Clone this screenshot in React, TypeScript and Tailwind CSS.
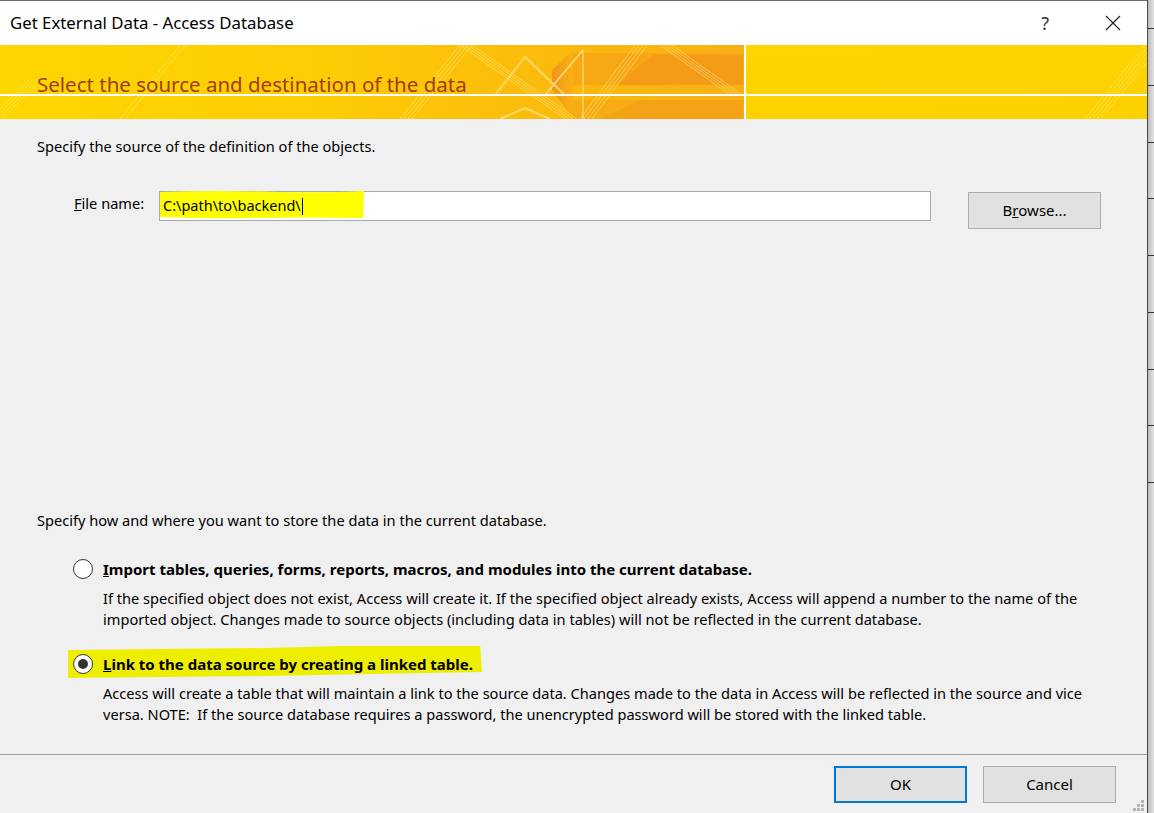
import React from "react";

const FONT = "font-['Noto_Sans',sans-serif]";

function BannerArt() {
  // decorative Office-style banner: orange wedges and pale stripes, drawn in the
  // banner's own coordinates (0..1147 x 0..74)
  const stripes = (x: number, y: number, dx: number, dy: number, n: number, gap: number) =>
    Array.from({ length: n }, (_, i) => (
      <line
        key={i}
        x1={x + i * gap}
        y1={y}
        x2={x + i * gap + dx}
        y2={y + dy}
        stroke="#fff2a0"
        strokeOpacity="0.45"
        strokeWidth="1"
      />
    ));
  return (
    <svg
      className="absolute inset-0"
      width="1147"
      height="74"
      viewBox="0 0 1147 74"
      aria-hidden
    >
      <defs>
        <linearGradient id="warm" x1="0" x2="1" y1="0" y2="0">
          <stop offset="0" stopColor="#fed600" />
          <stop offset="0.45" stopColor="#fdcc04" />
          <stop offset="0.7" stopColor="#fbbc0c" />
          <stop offset="1" stopColor="#f8b013" />
        </linearGradient>
        <linearGradient id="arrow" x1="0" x2="1" y1="0" y2="0">
          <stop offset="0" stopColor="#f29418" />
          <stop offset="1" stopColor="#f9b112" />
        </linearGradient>
        <linearGradient id="right" x1="0" x2="1" y1="0" y2="1">
          <stop offset="0" stopColor="#fed800" />
          <stop offset="1" stopColor="#fdd000" />
        </linearGradient>
      </defs>
      <rect x="0" y="0" width="1147" height="74" fill="url(#right)" />
      <rect x="0" y="0" width="745" height="74" fill="url(#warm)" />
      {/* arrow pointing left */}
      <polygon points="552,25 573,5 573,74 552,45" fill="url(#arrow)" />
      <rect x="573" y="8" width="172" height="32" fill="#f6a417" opacity="0.8" />
      <rect x="573" y="55" width="172" height="19" fill="#f6a417" opacity="0.6" />
      <rect x="582" y="5" width="2" height="69" fill="#ffe070" opacity="0.6" />
      {/* dark trapezoid on the right of the art */}
      <polygon points="617,40 653,10 743,10 743,40" fill="#f49c18" />
      <polygon points="600,74 640,55 743,55 743,74" fill="#f5a018" opacity="0.8" />
      {/* pale triangle outlines */}
      <polyline points="495,50 525,12 565,50" fill="none" stroke="#ffe27a" strokeOpacity="0.8" strokeWidth="2" />
      <polyline points="500,74 525,63 550,74" fill="none" stroke="#ffe27a" strokeOpacity="0.8" strokeWidth="2" />
      <polyline points="545,50 583,5" fill="none" stroke="#ffe8a0" strokeOpacity="0.8" strokeWidth="1.5" />
      {stripes(460, 0, 105, 74, 4, 4)}
      {stripes(660, 0, 70, 50, 4, 4)}
      {stripes(580, 74, 55, -74, 4, 4)}
      {stripes(400, 74, 60, -74, 4, 4)}
      {stripes(-10, 74, 40, -40, 4, 4)}
      {stripes(120, 74, 60, -74, 2, 5)}
      {stripes(1085, 74, 60, -74, 5, 4)}
      {/* white frame lines */}
      <rect x="0" y="49" width="1147" height="2" fill="#ffffff" />
      <rect x="744" y="0" width="2" height="74" fill="#ffffff" />
    </svg>
  );
}

function Radio({ checked }: { checked?: boolean }) {
  return (
    <span className="flex h-[20px] w-[20px] shrink-0 items-center justify-center rounded-full border border-[#333] bg-white">
      {checked && <span className="h-[10px] w-[10px] rounded-full bg-[#333]" />}
    </span>
  );
}

function Button({ children, focused }: { children: React.ReactNode; focused?: boolean }) {
  return (
    <button
      type="button"
      className={`flex h-[37px] w-[133px] items-center justify-center bg-[#e1e1e1] text-[15px] text-black ${
        focused ? "border-2 border-[#0078d7]" : "border border-[#adadad]"
      }`}
    >
      {children}
    </button>
  );
}

export default function App() {
  return (
    <div className={`flex h-[813px] w-[1154px] overflow-hidden bg-[#dcdcdc] ${FONT}`}>
      <div className="flex w-[1148px] shrink-0 flex-col border-r border-[#4a4a4a] bg-[#f0f0f0]">
        <div className="h-px bg-[#6e6e64]" />
        {/* title bar */}
        <div className="flex h-[44px] items-center bg-white pl-[10px]">
          <span className="text-[16.8px] text-black">Get External Data - Access Database</span>
          <span className="ml-auto mr-[56px] text-[18px] text-[#333]">?</span>
          <svg width="16" height="16" viewBox="0 0 16 16" className="mr-[26px]" aria-hidden>
            <path d="M1 1 L15 15 M15 1 L1 15" stroke="#222" strokeWidth="1.2" />
          </svg>
        </div>

        {/* banner */}
        <div className="relative h-[74px]">
          <BannerArt />
          <div className="relative pl-[37px] pt-[25px] text-[20.5px] leading-[28px] text-[#a23c00]">
            Select the source and destination of the data
          </div>
        </div>

        {/* body */}
        <div className="flex flex-1 flex-col pl-[37px] text-[14.6px] text-black">
          <p className="mt-[17px] leading-[20px]">Specify the source of the definition of the objects.</p>

          <div className="mt-[35px] flex items-start">
            <label className="ml-[37px] mt-[2px] w-[85px] leading-[20px]">
              <span className="underline">F</span>ile name:
            </label>
            <div className="relative h-[30px] w-[772px] border border-[#a9a9a9] bg-white">
              <svg className="absolute left-[-1px] top-[-2px]" width="206" height="30" viewBox="0 0 206 30" aria-hidden>
                <path d="M1 2 Q60 0 120 2 Q170 3 205 1 L204 28 Q150 27 100 28 Q50 29 1 27 Z" fill="#ffff00" />
              </svg>
              <span className="relative flex h-full items-center pl-[3px] text-[14.5px]">
                C:\path\to\backend\
                <span className="ml-[1px] h-[17px] w-px bg-black" />
              </span>
            </div>
            <div className="ml-[37px] mt-px">
              <Button>
                B<span className="underline">r</span>owse...
              </Button>
            </div>
          </div>

          <p className="mt-[281px] leading-[20px]">Specify how and where you want to store the data in the current database.</p>

          <div className="mt-[29px] flex items-center pl-[36px]">
            <Radio />
            <span className="ml-[10px] text-[15px] font-bold leading-[20px]">
              <span className="underline">I</span>mport tables, queries, forms, reports, macros, and modules into the current database.
            </span>
          </div>
          <div className="mt-[9px] pl-[66px] leading-[21px]">
            <div className="whitespace-nowrap">
              If the specified object does not exist, Access will create it. If the specified object already exists, Access will append a number to the name of the
            </div>
            <div className="whitespace-nowrap">
              imported object. Changes made to source objects (including data in tables) will not be reflected in the current database.
            </div>
          </div>

          <div className="relative mt-[24px] flex items-center pl-[36px]">
            <svg className="absolute left-[31px] top-[-8px]" width="420" height="36" viewBox="0 0 420 36" aria-hidden>
              <path d="M0 4 Q100 3 200 2 Q300 -1 412 -3 L414 26 Q300 28 200 30 Q100 31 0 32 Z" fill="#eeee00" />
            </svg>
            <span className="relative">
              <Radio checked />
            </span>
            <span className="relative ml-[10px] text-[15px] font-bold leading-[20px]">
              <span className="underline">L</span>ink to the data source by creating a linked table.
            </span>
          </div>
          <div className="mt-[9px] pl-[66px] leading-[21px]">
            <div className="whitespace-nowrap">
              Access will create a table that will maintain a link to the source data. Changes made to the data in Access will be reflected in the source and vice
            </div>
            <div className="whitespace-nowrap">
              versa. NOTE:&nbsp; If the source database requires a password, the unencrypted password will be stored with the linked table.
            </div>
          </div>
        </div>

        {/* footer */}
        <div className="h-px bg-[#a0a0a0]" />
        <div className="relative flex h-[58px] items-start justify-end gap-[16px] pr-[31px] pt-[11px]">
          <Button focused>OK</Button>
          <Button>Cancel</Button>
          <svg className="absolute bottom-[1px] right-[2px]" width="12" height="12" viewBox="0 0 12 12" aria-hidden>
            <g fill="#b4b4b4">
              <rect x="8" y="0" width="3" height="3" />
              <rect x="4" y="4" width="3" height="3" />
              <rect x="8" y="4" width="3" height="3" />
              <rect x="0" y="8" width="3" height="3" />
              <rect x="4" y="8" width="3" height="3" />
              <rect x="8" y="8" width="3" height="3" />
            </g>
          </svg>
        </div>
      </div>

      {/* sliver of the spreadsheet behind the dialog */}
      <div className="flex flex-1 flex-col bg-gradient-to-r from-[#bdbdbd] to-[#e2e2e2]">
        {[29, 57, 57, 56, 57, 57, 57, 56, 57].map((h, i) => (
          <div key={i} className="shrink-0 border-b border-[#333]" style={{ height: h }} />
        ))}
      </div>
    </div>
  );
}
